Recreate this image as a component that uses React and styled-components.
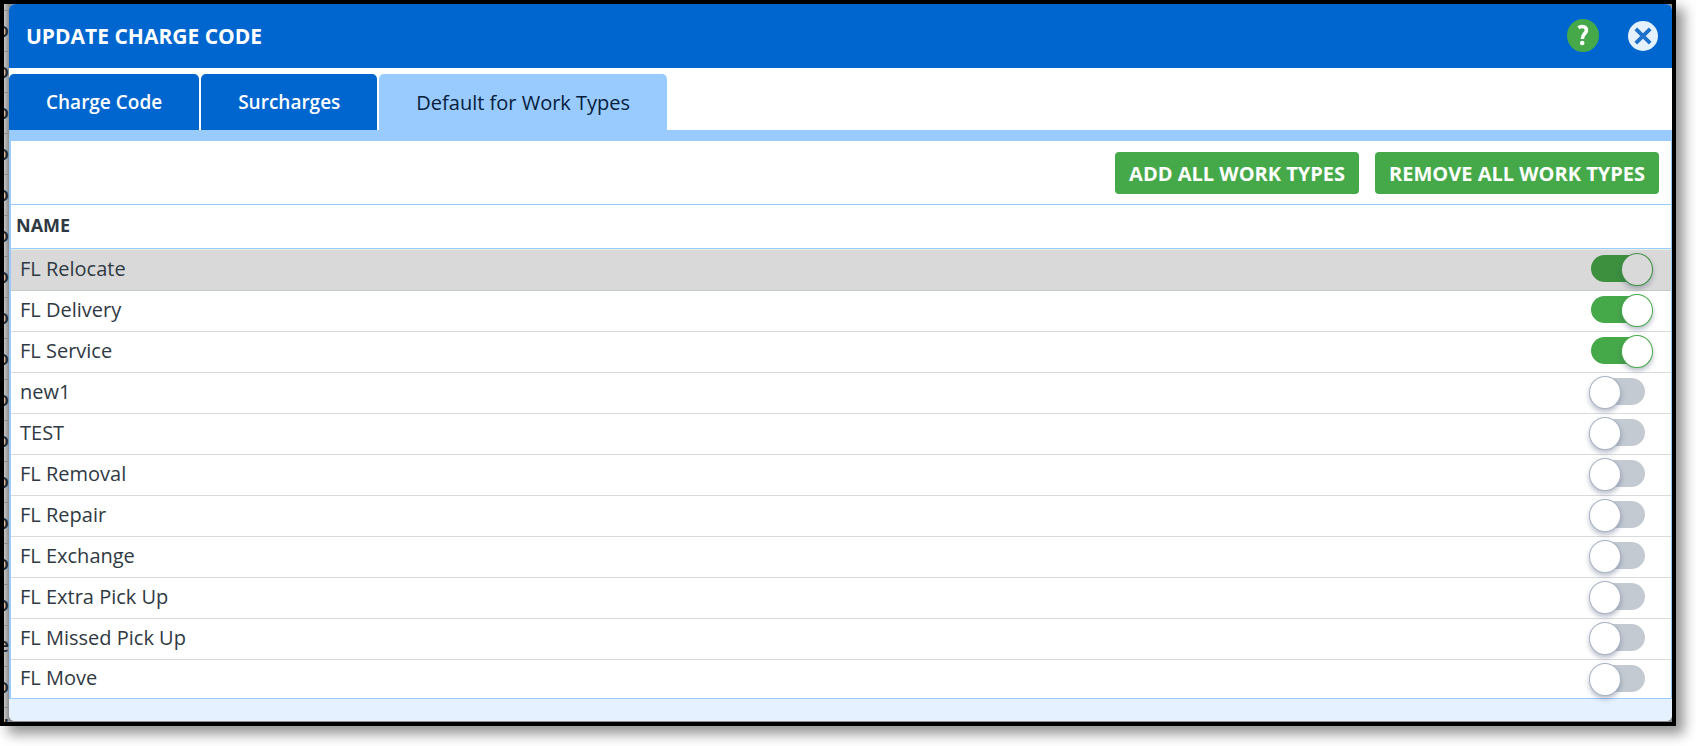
import React, { useState } from 'react';
import styled, { createGlobalStyle } from 'styled-components';

const GlobalStyle = createGlobalStyle`
    * {
        box-sizing: border-box;
    }
    body {
        margin: 0;
        background: #ffffff;
        font-family: "Open Sans", "Noto Sans", sans-serif;
        color: #2f3943;
    }
    button {
        font-family: inherit;
        cursor: pointer;
    }
`

const Page = styled.div`
    padding: 0 20px 20px 0;
    overflow: hidden;
`
const Frame = styled.div`
    display: grid;
    grid-template-columns: 5px 1fr;
    border: 4px solid #000000;
    background: #8a8c8e;
    box-shadow: 8px 8px 12px rgba(0, 0, 0, 0.42);
`

/* list behind the dialog */
const Behind = styled.div`
    height: 0;
    min-height: 100%;
    overflow: hidden;
    padding-top: 6px;
    background: linear-gradient(to right, #c4c4c4, #8e8e8e);
`
const BehindRow = styled.div`
    display: flex;
    justify-content: flex-end;
    height: 41px;
    border-top: 1px solid #8f8f8f;
    font-size: 20px;
    line-height: 38px;
    font-weight: 600;
    color: #23282d;
`

const Dialog = styled.section`
    margin-bottom: 1px;
    border-radius: 6px;
    overflow: hidden;
    background: #ffffff;
`
const Header = styled.header`
    display: flex;
    align-items: center;
    height: 64px;
    padding: 0 14px 1px 17px;
    background: #0066cf;
`
const Title = styled.h1`
    flex: 1;
    margin: 0;
    font-size: 21px;
    font-weight: 700;
    color: #ffffff;
`
const IconButton = styled.button`
    display: flex;
    margin: 0 0 0 29px;
    padding: 0;
    border: 0;
    background: none;
`

const Tabs = styled.div`
    display: flex;
    gap: 2px;
    padding-top: 6px;
    border-bottom: 11px solid #99cbff;
`
const Tab = styled.button`
    height: 56px;
    padding: 0 37px;
    border: 0;
    border-radius: 5px 5px 0 0;
    background: ${(props) => (props.$active ? "#99cbff" : "#0066cf")};
    color: ${(props) => (props.$active ? "#06203c" : "#ffffff")};
    font-size: ${(props) => (props.$active ? "20px" : "19px")};
    font-weight: ${(props) => (props.$active ? 500 : 600)};
`

const Panel = styled.div`
    border: solid #99cbff;
    border-width: 0 1px 0 2px;
`
const Toolbar = styled.div`
    display: flex;
    justify-content: flex-end;
    gap: 16px;
    padding: 11px 12px 10px;
`
const Action = styled.button`
    height: 42px;
    padding: 0 14px;
    border: 0;
    border-radius: 4px;
    background: #46a949;
    color: #ffffff;
    font-size: 20px;
    font-weight: 700;
`

const Table = styled.table`
    width: 100%;
    border-spacing: 0;
    border-bottom: 1px solid #99cbff;
`
const HeadCell = styled.th`
    height: 45px;
    padding: 0 5px 4px;
    border: solid #99cbff;
    border-width: 1px 0;
    text-align: left;
    font-size: 18px;
    font-weight: 700;
`
const Row = styled.tr`
    background: ${(props) => (props.$hover ? "#d9d9d9" : "#ffffff")};

    &:first-child td {
        height: 42px;
        border-top: 1px solid #e4eee4;
    }
    &:last-child td {
        height: 38px;
        padding-bottom: 2px;
        border-bottom: 0;
    }
`
const Cell = styled.td`
    height: 41px;
    padding: 0 9px 3px;
    border-bottom: 1px solid ${(props) => (props.$hover ? "#c3ccc3" : "#d9dadb")};
    font-size: 20px;
    line-height: 24px;
    font-weight: 500;
`
const SwitchCell = styled(Cell)`
    width: 100px;
    padding-right: 26px;
`
const Switch = styled.input`
    appearance: none;
    display: block;
    position: relative;
    width: 54px;
    height: 27px;
    margin: 0 0 0 auto;
    border-radius: 14px;
    background: #c4cad2;
    cursor: pointer;

    &::before {
        content: "";
        position: absolute;
        top: -2px;
        left: -2px;
        width: 30px;
        height: 31px;
        border: 1px solid #a9b2c2;
        border-radius: 50%;
        background: #ffffff;
        box-shadow: 0 3px 5px rgba(60, 75, 110, 0.35);
    }
    &:checked {
        background: ${(props) => (props.$dim ? "#3c903e" : "#46a949")};
    }
    &:checked::before {
        left: 30px;
        border-color: ${(props) => (props.$dim ? "#3c903e" : "#46a949")};
        background: ${(props) => (props.$dim ? "#d9d9d9" : "#ffffff")};
    }
`
const Footer = styled.footer`
    height: 22px;
    background: #e5f1fe;
`

const HelpIcon = () => (
    <svg width="32" height="33" viewBox="0 0 32 33">
        <ellipse cx="16" cy="16.5" rx="16" ry="16.5" fill="#46a949" />
        <path
            d="M11.4 8.7C14.6 6.6 19.6 7.2 19.4 11.3C19.2 14.8 15.4 14.6 15.4 20"
            fill="none"
            stroke="#ffffff"
            strokeWidth="3.6"
        />
        <circle cx="15.2" cy="24" r="2.3" fill="#ffffff" />
    </svg>
)
const CloseIcon = () => (
    <svg width="30" height="30" viewBox="0 0 30 30">
        <circle cx="15" cy="15" r="15" fill="#e5f1fe" />
        <path d="M7.8 7.8L22.2 22.2M22.2 7.8L7.8 22.2" stroke="#1f72cb" strokeWidth="3.8" />
    </svg>
)

const tabs = ["Charge Code", "Surcharges", "Default for Work Types"];
const behind = [
    "o", "o", "o", "o", "o", "o", "o", "o", "o",
    "o", "o", "o", "o", "o", "o", "e", "o", "ill",
];
const workTypes = [
    { name: "FL Relocate", on: true },
    { name: "FL Delivery", on: true },
    { name: "FL Service", on: true },
    { name: "new1", on: false },
    { name: "TEST", on: false },
    { name: "FL Removal", on: false },
    { name: "FL Repair", on: false },
    { name: "FL Exchange", on: false },
    { name: "FL Extra Pick Up", on: false },
    { name: "FL Missed Pick Up", on: false },
    { name: "FL Move", on: false },
];

const App = () => {

    const [types, setTypes] = useState(workTypes);
    const [activeTab, setActiveTab] = useState(2);

    const setAll = (on) => setTypes(types.map((type) => ({ ...type, on })));
    const toggle = (name) =>
        setTypes(types.map((type) => (type.name === name ? { ...type, on: !type.on } : type)));

    return (
        <Page>
            <GlobalStyle />
            <Frame>
                <Behind aria-hidden="true">
                    {behind.map((text, i) => <BehindRow key={i}>{text}</BehindRow>)}
                </Behind>
                <Dialog>
                    <Header>
                        <Title>UPDATE CHARGE CODE</Title>
                        <IconButton aria-label="Help"><HelpIcon /></IconButton>
                        <IconButton aria-label="Close"><CloseIcon /></IconButton>
                    </Header>
                    <Tabs role="tablist">
                        {tabs.map((tab, i) => (
                            <Tab
                                key={tab}
                                role="tab"
                                aria-selected={i === activeTab}
                                $active={i === activeTab}
                                onClick={() => setActiveTab(i)}
                            >
                                {tab}
                            </Tab>
                        ))}
                    </Tabs>
                    <Panel>
                        <Toolbar>
                            <Action onClick={() => setAll(true)}>ADD ALL WORK TYPES</Action>
                            <Action onClick={() => setAll(false)}>REMOVE ALL WORK TYPES</Action>
                        </Toolbar>
                        <Table>
                            <thead>
                                <tr><HeadCell colSpan="2">NAME</HeadCell></tr>
                            </thead>
                            <tbody>
                                {types.map((type, i) => (
                                    <Row key={type.name} $hover={i === 0}>
                                        <Cell $hover={i === 0}>
                                            <label htmlFor={`type-${i}`}>{type.name}</label>
                                        </Cell>
                                        <SwitchCell $hover={i === 0}>
                                            <Switch
                                                type="checkbox"
                                                role="switch"
                                                id={`type-${i}`}
                                                checked={type.on}
                                                $dim={i === 0}
                                                onChange={() => toggle(type.name)}
                                            />
                                        </SwitchCell>
                                    </Row>
                                ))}
                            </tbody>
                        </Table>
                    </Panel>
                    <Footer />
                </Dialog>
            </Frame>
        </Page>
    );
};

export default App;
